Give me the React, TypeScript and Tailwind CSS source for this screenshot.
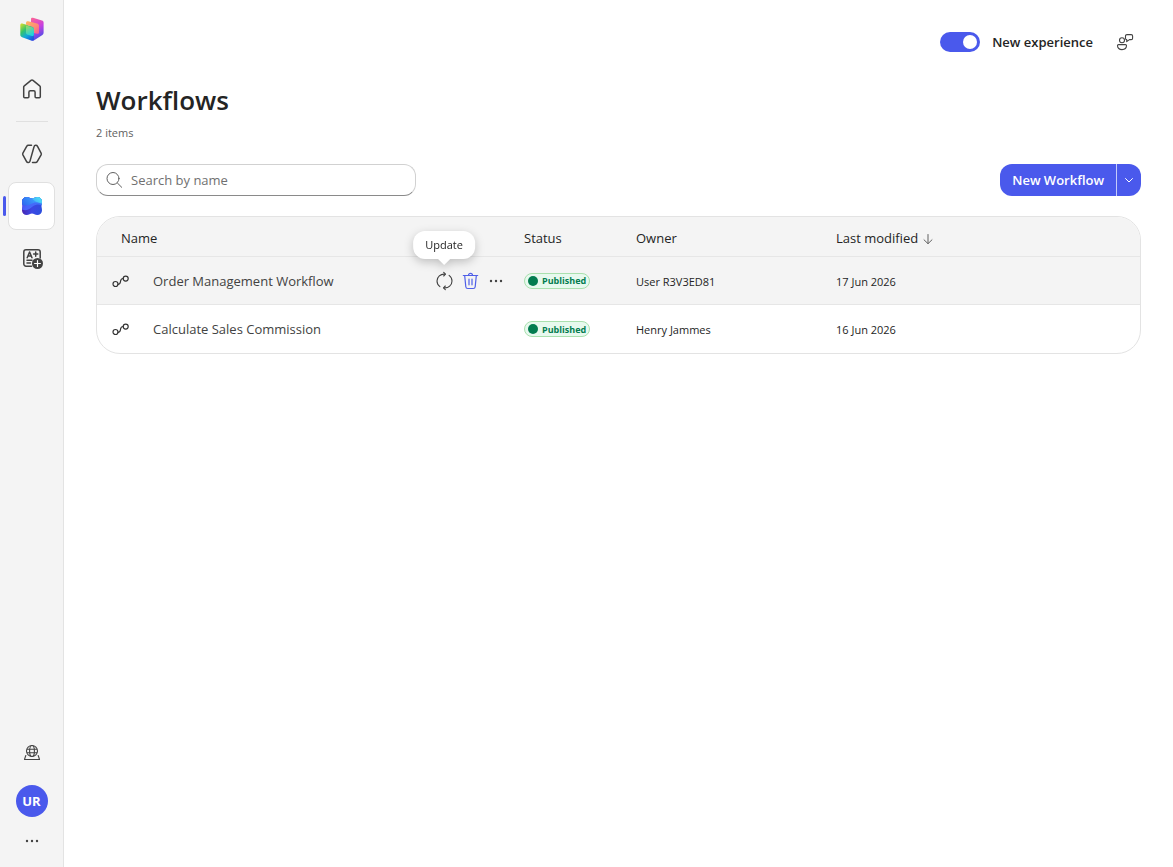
import { useState } from "react";
import type { ReactNode } from "react";

type IconProps = {
  className?: string;
};

type Workflow = {
  id: number;
  name: string;
  status: string;
  owner: string;
  modified: string;
};

const workflows: Workflow[] = [
  { id: 1, name: "Order Management Workflow", status: "Published", owner: "User R3V3ED81", modified: "17 Jun 2026" },
  { id: 2, name: "Calculate Sales Commission", status: "Published", owner: "Henry Jammes", modified: "16 Jun 2026" },
];

function Logo() {
  return (
    <svg width="24" height="24" viewBox="0 0 24 24" aria-hidden="true">
      <defs>
        <linearGradient id="logoBack" x1="0.3" y1="0" x2="0.6" y2="1">
          <stop offset="0" stopColor="#f8609b" />
          <stop offset="0.45" stopColor="#c840e0" />
          <stop offset="1" stopColor="#3b4fe8" />
        </linearGradient>
        <linearGradient id="logoMid" x1="0" y1="0" x2="1" y2="1">
          <stop offset="0" stopColor="#ffb860" />
          <stop offset="0.6" stopColor="#ff8a76" />
          <stop offset="1" stopColor="#f0569c" />
        </linearGradient>
        <linearGradient id="logoFront" x1="0.1" y1="0" x2="0.8" y2="1">
          <stop offset="0" stopColor="#d3dc2c" />
          <stop offset="0.35" stopColor="#35c46b" />
          <stop offset="0.65" stopColor="#12a9d8" />
          <stop offset="1" stopColor="#1a56e0" />
        </linearGradient>
        <linearGradient id="logoInner" x1="0" y1="0" x2="0.4" y2="1">
          <stop offset="0" stopColor="#a3d85a" />
          <stop offset="1" stopColor="#1fd3dc" />
        </linearGradient>
      </defs>
      <path d="M11 2.200c0-1.300 1-1.700 2-1.400l9 2.800c1 .3 1.600 1 1.600 2v10.200c0 1-.4 1.700-1.200 2.200l-8.600 5.400c-1 .6-2.800.4-2.800-1z" fill="url(#logoBack)" />
      <path d="M.3 8c0-1.300.9-1.800 2-1.500l10 3c1 .3 1.600 1 1.600 2V23c-.8.6-1.800.8-2.800.4l-9-3.200C1 19.800.3 19 .3 18z" fill="url(#logoFront)" />
      <path d="M6 6c0-1.300.9-2 2.200-1.700l8.800 2.200c1.300.4 2 1.200 2 2.400v6.500c0 1-.8 1.500-1.900 1.300L13.900 16v-4c0-1.200-.6-2-1.700-2.300L6 7.800z" fill="url(#logoMid)" />
      <path d="M6 8.400l6.200 1.800c1.100.3 1.700 1 1.700 2.200v5.200c0 1.200-.8 1.700-2 1.400l-4-1.200C6.700 17.500 6 16.700 6 15.600z" fill="url(#logoInner)" />
    </svg>
  );
}

function HomeIcon() {
  return (
    <svg width="24" height="24" viewBox="0 0 24 24" fill="none" stroke="#424242" strokeWidth="1.500" strokeLinejoin="round" aria-hidden="true">
      <path d="M11 3.400 4.300 8.900c-.4.3-.6.7-.6 1.200v9.600c0 .6.400 1 1 1h3.200c.6 0 1-.4 1-1v-4.500c0-.8.600-1.400 1.400-1.400h3.400c.8 0 1.400.6 1.400 1.400v4.500c0 .6.400 1 1 1h3.200c.6 0 1-.4 1-1v-9.600c0-.5-.2-.9-.6-1.200L13 3.400c-.6-.5-1.400-.5-2 0z" />
    </svg>
  );
}

function AgentsIcon() {
  return (
    <svg width="24" height="24" viewBox="0 0 24 24" fill="none" stroke="#424242" strokeWidth="1.500" strokeLinecap="round" strokeLinejoin="round" aria-hidden="true">
      <path d="M11.500 3.300H8.300c-.7 0-1.200.3-1.500.9l-3.900 6.900c-.3.600-.3 1.200 0 1.800l3.700 6.800c.3.600.8.900 1.500.9h.3c.8 0 1.300-.4 1.500-1.200l4.200-14.900c.2-.8.700-1.200 1.500-1.200h.3c.7 0 1.200.3 1.500.9l3.700 6.900c.3.600.3 1.200 0 1.800l-3.900 6.800c-.3.600-.8.900-1.500.9h-3.200" />
    </svg>
  );
}

function WorkflowsIcon() {
  return (
    <svg width="24" height="24" viewBox="0 0 24 24" aria-hidden="true">
      <defs>
        <linearGradient id="waveBase" x1="0" y1="0.6" x2="1" y2="0.8">
          <stop offset="0" stopColor="#4a1fa8" />
          <stop offset="0.5" stopColor="#3c48e4" />
          <stop offset="1" stopColor="#2a50dc" />
        </linearGradient>
        <linearGradient id="waveMid" x1="0" y1="0" x2="1" y2="0.5">
          <stop offset="0" stopColor="#3a3be6" />
          <stop offset="0.5" stopColor="#4a62fa" />
          <stop offset="1" stopColor="#3a78f8" />
        </linearGradient>
        <linearGradient id="waveTop" x1="0" y1="0.6" x2="1" y2="0.2">
          <stop offset="0" stopColor="#2f6cf0" />
          <stop offset="0.55" stopColor="#3a98fb" />
          <stop offset="1" stopColor="#50ecf2" />
        </linearGradient>
        <clipPath id="waveClip">
          <path d="M2 7.500C2 4.800 4 3 6.800 3c2.200 0 3.400 1.400 5.200 1.400S15 3 17.200 3C20 3 22 4.800 22 7.500c0 1.900-.5 3-.5 4.500s.5 2.600.5 4.500c0 2.700-2 4.500-4.800 4.500-2.200 0-3.400-1.400-5.200-1.400S9 21 6.800 21C4 21 2 19.200 2 16.500c0-1.900.5-3 .5-4.500S2 9.400 2 7.500z" />
        </clipPath>
      </defs>
      <g clipPath="url(#waveClip)">
        <rect x="1" y="2" width="22" height="20" fill="url(#waveBase)" />
        <path d="M1 15c4 2.500 8 1 11-2s7-3.500 11-1V2H1z" fill="url(#waveMid)" />
        <path d="M1 10.500c4 1.500 7 1.500 10-.5s7-2.500 12 .5V2H1z" fill="url(#waveTop)" />
        <path d="M12 4.300C14 7 17 9 23 9V2H12z" fill="#4fe3f4" opacity="0.45" />
      </g>
    </svg>
  );
}

function EvaluationIcon() {
  return (
    <svg width="24" height="24" viewBox="0 0 24 24" fill="none" stroke="#424242" strokeWidth="1.500" strokeLinecap="round" strokeLinejoin="round" aria-hidden="true">
      <path d="M11.500 20.200H6c-1.200 0-2.200-1-2.200-2.200V5.900c0-1.200 1-2.200 2.200-2.200h12c1.200 0 2.200 1 2.200 2.200v6" />
      <path d="m7.200 11.700 2.400-5.700 2.400 5.700M8 10h3.200M13.600 8h4.200M15.700 6v4.200M7 14.200h5M7 17h3.500" />
      <circle cx="17.500" cy="17.500" r="5.500" fill="#424242" stroke="none" />
      <path d="M17.500 14.600v5.800M14.600 17.500h5.800" stroke="#fff" strokeWidth="1.200" />
    </svg>
  );
}

function EnvironmentIcon() {
  return (
    <svg width="20" height="20" viewBox="0 0 20 20" fill="none" stroke="#424242" strokeWidth="1.100" strokeLinejoin="round" aria-hidden="true">
      <circle cx="10" cy="8" r="5.500" />
      <ellipse cx="10" cy="8" rx="2.400" ry="5.500" />
      <path d="M5 6.200h10M5 9.800h10M4.300 12.600h-.6L2.500 16.500h15l-1.200-3.900h-.6" />
    </svg>
  );
}

function MoreIcon({ className }: IconProps) {
  return (
    <svg width="16" height="16" viewBox="0 0 16 16" fill="currentColor" className={className} aria-hidden="true">
      <circle cx="3" cy="8" r="1.200" />
      <circle cx="8" cy="8" r="1.200" />
      <circle cx="13" cy="8" r="1.200" />
    </svg>
  );
}

function FeedbackIcon() {
  return (
    <svg width="20" height="20" viewBox="0 0 20 20" fill="none" stroke="#424242" strokeWidth="1.100" strokeLinejoin="round" aria-hidden="true">
      <circle cx="7" cy="8.300" r="2.500" />
      <path d="M3.500 12.600h7c.6 0 1 .4 1 1 0 2.500-1.800 4-4.500 4s-4.500-1.500-4.500-4c0-.6.400-1 1-1z" />
      <path d="M12 2.600h4.200c.8 0 1.400.6 1.400 1.400v2.200c0 .8-.6 1.400-1.400 1.400h-1.800l-2.700 2V7.600c-.7 0-1.200-.6-1.200-1.400V4c0-.8.600-1.400 1.500-1.400z" />
    </svg>
  );
}

function SearchIcon() {
  return (
    <svg width="20" height="20" viewBox="0 0 20 20" fill="none" stroke="#616161" strokeWidth="1" strokeLinecap="round" aria-hidden="true">
      <circle cx="8" cy="8.500" r="6" />
      <path d="m12.400 13 4.300 4.300" />
    </svg>
  );
}

function FlowIcon() {
  return (
    <svg width="20" height="20" viewBox="0 0 20 20" fill="none" stroke="#333" strokeWidth="1.200" strokeLinecap="round" aria-hidden="true">
      <circle cx="4.500" cy="13" r="2.500" />
      <circle cx="14.700" cy="7.600" r="2.500" />
      <path d="M7 13.300c1.500 0 2.200-.8 2.400-2.300l.2-1.100c.3-1.600 1-2.400 2.500-2.400" />
    </svg>
  );
}

function UpdateIcon() {
  return (
    <svg width="20" height="20" viewBox="0 0 20 20" fill="none" stroke="#424242" strokeWidth="1.100" strokeLinecap="round" strokeLinejoin="round" aria-hidden="true">
      <path d="M11 3.200C6.500 2.700 3 6 3 10c0 2.300 1.100 4.300 2.900 5.600" />
      <path d="M10 16.800c4.500.5 8-2.800 8-6.800 0-2.300-1.100-4.300-2.900-5.600" />
      <path d="m9.700 1.300 1.800 1.900-1.800 1.800M11.300 15l-1.800 1.800 1.800 1.900" />
    </svg>
  );
}

function TrashIcon() {
  return (
    <svg width="20" height="20" viewBox="0 0 20 20" fill="none" stroke="#4f5fe8" strokeWidth="1.200" strokeLinecap="round" strokeLinejoin="round" aria-hidden="true">
      <path d="M3.300 4.500h14.400M8.500 4.300a2 2 0 0 1 4 0M4.700 4.800l1.100 10.900c.1 1.100.9 1.800 2 1.800h5.400c1.100 0 1.900-.7 2-1.800l1.100-10.900M9 8.200v5.600M12 8.200v5.600" />
    </svg>
  );
}

type NavButtonProps = {
  label: string;
  active?: boolean;
  children: ReactNode;
};

function NavButton({ label, active, children }: NavButtonProps) {
  return (
    <div className="relative flex w-full justify-center">
      {active && <span className="absolute left-[3px] top-3.5 h-5 w-[3px] rounded-full bg-[#4a59ec]" />}
      <button
        type="button"
        aria-label={label}
        className={
          active
            ? "flex h-12 w-[47px] items-center justify-center rounded-lg border border-[#e0e0e0] bg-white"
            : "flex h-12 w-[47px] items-center justify-center rounded-lg"
        }
      >
        {children}
      </button>
    </div>
  );
}

function Sidebar() {
  return (
    <nav aria-label="Main" className="flex w-16 shrink-0 flex-col items-center border-r border-[#e3e3e3] bg-[#f4f4f4] text-[#424242]">
      <a href="#" aria-label="Start" className="mt-[5px] flex h-12 w-12 items-center justify-center">
        <Logo />
      </a>
      <div className="mt-3 w-full">
        <NavButton label="Home"><HomeIcon /></NavButton>
      </div>
      <div className="mt-2 h-px w-8 bg-[#e0e0e0]" />
      <div className="mt-2 flex w-full flex-col gap-1">
        <NavButton label="Agents"><AgentsIcon /></NavButton>
        <NavButton label="Workflows" active><WorkflowsIcon /></NavButton>
        <NavButton label="Evaluations"><EvaluationIcon /></NavButton>
      </div>
      <div className="mt-auto flex flex-col items-center pb-[18px]">
        <button type="button" aria-label="Environment" className="flex h-8 w-8 items-center justify-center">
          <EnvironmentIcon />
        </button>
        <button type="button" aria-label="Account" className="mt-4 flex h-8 w-8 items-center justify-center rounded-full bg-[#4a59ec] pt-0.5 text-[13px] font-bold text-white">
          UR
        </button>
        <button type="button" aria-label="More" className="mt-4 flex h-4 w-8 items-center justify-center">
          <MoreIcon />
        </button>
      </div>
    </nav>
  );
}

function StatusBadge({ status }: { status: string }) {
  return (
    <span className="flex h-4 w-fit items-center gap-1 rounded-full border border-[#a9e0ae] bg-[#e7f9ee] pl-[3px] pr-[3px] text-[9px] leading-none font-bold text-[#037c50]">
      <span className="h-2.5 w-2.5 rounded-full bg-[#037c50]" />
      {status}
    </span>
  );
}

function RowActions() {
  return (
    <div className="flex items-center gap-0.5">
      <div className="relative">
        <button type="button" aria-label="Update" aria-describedby="update-tip" className="flex h-6 w-6 items-center justify-center">
          <UpdateIcon />
        </button>
        <div className="absolute bottom-full left-1/2 mb-2.5 -translate-x-1/2 drop-shadow-[0_3px_5px_rgba(0,0,0,0.22)]">
          <div id="update-tip" role="tooltip" className="rounded-xl bg-white px-3 py-1.5 text-[11px] leading-4 text-[#242424]">
            Update
          </div>
          <span className="absolute left-1/2 top-full -mt-1.5 h-2.5 w-2.5 -translate-x-1/2 rotate-45 bg-white" />
        </div>
      </div>
      <button type="button" aria-label="Delete" className="flex h-6 w-6 items-center justify-center">
        <TrashIcon />
      </button>
      <button type="button" aria-label="More actions" className="flex h-6 w-6 items-center justify-center text-[#424242]">
        <MoreIcon />
      </button>
    </div>
  );
}

function WorkflowTable() {
  const activeId = 1;

  return (
    <div className="mt-5 rounded-3xl border border-[#e3e3e3]">
      <table className="w-full table-fixed border-separate border-spacing-0 text-left text-[#242424]">
        <thead>
          <tr className="h-10 text-[13px]">
            <th scope="col" className="rounded-tl-[23px] border-b border-[#e6e6e6] bg-[#f4f4f4] pt-1 pl-6 font-normal">Name</th>
            <th scope="col" className="w-28 border-b border-[#e6e6e6] bg-[#f4f4f4] px-2 pt-1 font-normal">Status</th>
            <th scope="col" className="w-50 border-b border-[#e6e6e6] bg-[#f4f4f4] px-2 pt-1 font-normal">Owner</th>
            <th scope="col" aria-sort="descending" className="w-78 rounded-tr-[23px] border-b border-[#e6e6e6] bg-[#f4f4f4] px-2 pt-1 font-normal">
              <span className="flex items-center gap-1">
                Last modified
                <svg width="12" height="12" viewBox="0 0 12 12" fill="none" stroke="#616161" strokeLinecap="round" strokeLinejoin="round" aria-hidden="true">
                  <path d="M6 1.500v9M2 6.800l4 3.900 4-3.900" />
                </svg>
              </span>
            </th>
          </tr>
        </thead>
        <tbody>
          {workflows.map((w) => (
            <tr key={w.id} className={w.id === activeId ? "h-12 bg-[#f4f4f4] text-[11px]" : "h-12 text-[11px]"}>
              <td className={w.id === activeId ? "border-b border-[#e6e6e6] pl-3.5 pr-2" : "pl-3.5 pr-2"}>
                <div className="flex items-center">
                  <FlowIcon />
                  <a href="#" className="ml-[22px] flex-1 pt-0.5 text-[13px] text-[#424242]">{w.name}</a>
                  {w.id === activeId && <RowActions />}
                </div>
              </td>
              <td className={w.id === activeId ? "border-b border-[#e6e6e6] px-2" : "px-2"}>
                <StatusBadge status={w.status} />
              </td>
              <td className={w.id === activeId ? "border-b border-[#e6e6e6] px-2 pt-1" : "px-2 pt-0.5"}>{w.owner}</td>
              <td className={w.id === activeId ? "border-b border-[#e6e6e6] px-2 pt-1" : "px-2 pt-0.5"}>{w.modified}</td>
            </tr>
          ))}
        </tbody>
      </table>
    </div>
  );
}

function App() {
  const [newExperience, setNewExperience] = useState(true);
  const [query, setQuery] = useState("");

  return (
    <div className="flex min-h-screen bg-white font-['Open_Sans','Noto_Sans',sans-serif] text-[#242424]">
      <Sidebar />
      <main className="min-w-0 flex-1 px-8 pt-6">
        <div className="flex h-9 items-center justify-end">
          <input
            id="new-experience"
            type="checkbox"
            role="switch"
            checked={newExperience}
            onChange={(e) => setNewExperience(e.target.checked)}
            className="flex h-5 w-10 appearance-none items-center rounded-full bg-[#8a8a8a] px-[3px] before:h-3.5 before:w-3.5 before:rounded-full before:bg-white checked:justify-end checked:bg-[#4a59ec]"
          />
          <label htmlFor="new-experience" className="ml-3 pt-0.5 text-[13px] font-semibold">New experience</label>
          <button type="button" aria-label="Feedback" className="ml-4 flex h-8 w-8 items-center justify-center">
            <FeedbackIcon />
          </button>
        </div>

        <h1 className="mt-6 text-[26px] leading-8 font-semibold">Workflows</h1>
        <p className="mt-2 pt-px text-[11px] leading-4 text-[#616161]">2 items</p>

        <div className="mt-[23px] flex items-center justify-between">
          <div className="flex h-8 w-80 items-center gap-1.5 rounded-xl border border-[#d1d1d1] border-b-[#8a8a8a] px-2">
            <SearchIcon />
            <input
              type="search"
              aria-label="Search by name"
              placeholder="Search by name"
              value={query}
              onChange={(e) => setQuery(e.target.value)}
              className="min-w-0 flex-1 bg-transparent pt-0.5 text-[13px] outline-none placeholder:text-[#707070]"
            />
          </div>
          <div className="flex h-8 text-white">
            <button type="button" className="rounded-l-xl bg-[#4a59ec] px-3 pt-0.5 text-[13px] font-semibold">New Workflow</button>
            <button type="button" aria-label="More create options" className="flex w-[25px] items-center justify-center rounded-r-xl border-l border-[#c5cbfa] bg-[#4a59ec]">
              <svg width="10" height="10" viewBox="0 0 10 10" fill="none" stroke="currentColor" strokeLinecap="round" strokeLinejoin="round" aria-hidden="true">
                <path d="m1.500 3.500 3.500 3.500 3.500-3.500" />
              </svg>
            </button>
          </div>
        </div>

        <WorkflowTable />
      </main>
    </div>
  );
}

export default App;
